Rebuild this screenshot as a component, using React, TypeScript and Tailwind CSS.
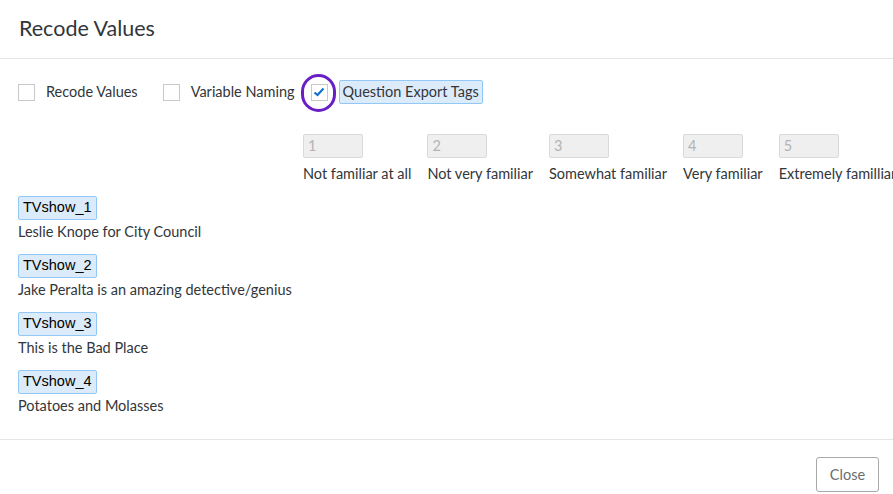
import React from "react";

const rows = [
  ["TVshow_1", "Leslie Knope for City Council"],
  ["TVshow_2", "Jake Peralta is an amazing detective/genius"],
  ["TVshow_3", "This is the Bad Place"],
  ["TVshow_4", "Potatoes and Molasses"],
];
const scale = ["Not familiar at all", "Not very familiar", "Somewhat familiar", "Very familiar", "Extremely familliar"];

export default function App() {
  return (
    <div className="w-[893px] h-[494px] bg-white text-[#32363a] overflow-hidden flex flex-col" style={{ fontFamily: "Lato, 'Noto Sans', sans-serif" }}>
      <div className="h-[59px] shrink-0 border-b border-[#e5e5e5] flex items-center px-[19px]">
        <h1 className="text-[21.5px] leading-none">Recode Values</h1>
      </div>
      <div className="h-[380px] shrink-0 overflow-hidden px-[18px] text-[14.5px]">
        <div className="flex items-center h-[24px] mt-[21px]">
          <span className="w-[17px] h-[17px] border border-[#c9c9c9] bg-white mr-[11px]" />
          <span className="mr-[25px]">Recode Values</span>
          <span className="w-[17px] h-[17px] border border-[#c9c9c9] bg-white mr-[11px]" />
          <span className="mr-[16px]">Variable Naming</span>
          <span className="relative w-[17px] h-[17px] border border-[#c9c9c9] bg-white mr-[11px] flex items-center justify-center">
            <svg width="12" height="10" viewBox="0 0 12 10"><path d="M1.5 5.5 L4.5 8 L10.5 1.5" fill="none" stroke="#0a6ed1" strokeWidth="2" /></svg>
            <span className="absolute left-[-11px] top-[-11px] w-[35px] h-[38px] rounded-full border-[3px] border-[#6a1fc6]" />
          </span>
          <span className="h-[24px] px-[3px] flex items-center bg-[#dcebfa] border border-[#91c8f6] rounded-[2px]">Question Export Tags</span>
        </div>
        <div className="flex gap-[16px] pl-[285px] mt-[30px]">
          {scale.map((s, i) => (
            <div key={s} className="flex flex-col">
              <div className="w-[60px] h-[24px] bg-[#efefef] border border-[#d9d9d9] rounded-[2px] text-[#b3b3b3] px-[4px] flex items-center">{i + 1}</div>
              <div className="mt-[6px] h-[20px] leading-[20px] whitespace-nowrap">{s}</div>
            </div>
          ))}
        </div>
        <div className="mt-[12px] flex flex-col gap-[10px]">
          {rows.map(([t, d]) => (
            <div key={t} className="flex flex-col items-start">
              <span className="h-[24px] px-[4px] flex items-center bg-[#dcebfa] border border-[#91c8f6] rounded-[2px] text-black" style={{ fontFamily: "'Liberation Sans', Arial, sans-serif" }}>{t}</span>
              <span className="h-[24px] leading-[24px]">{d}</span>
            </div>
          ))}
        </div>
      </div>
      <div className="border-t border-[#e5e5e5] flex-1 flex items-start justify-end px-[14px] pt-[17px]">
        <button className="w-[63px] h-[35px] border border-[#a8a8a8] rounded-[3px] text-[#6a6d70] text-[14.5px] bg-white">Close</button>
      </div>
    </div>
  );
}
